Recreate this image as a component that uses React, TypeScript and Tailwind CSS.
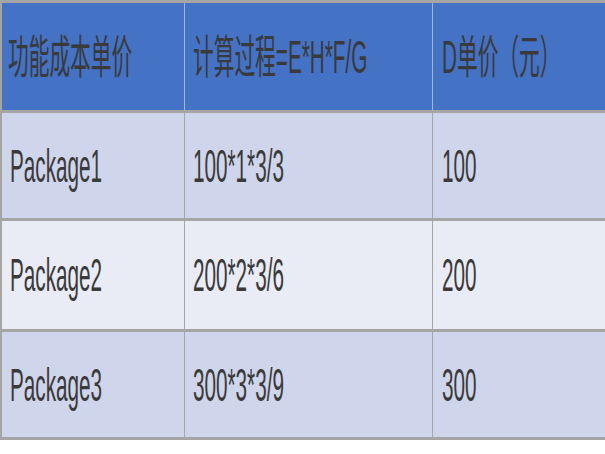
const rows = [
  { name: "Package1", calc: "100*1*3/3", price: "100", bg: "bg-[#CFD5EA]", h: "h-[108px]" },
  { name: "Package2", calc: "200*2*3/6", price: "200", bg: "bg-[#E9EBF5]", h: "h-[111px]" },
  { name: "Package3", calc: "300*3*3/9", price: "300", bg: "bg-[#CFD5EA]", h: "h-[108px]" },
];

const Txt = ({ children }: { children: React.ReactNode }) => (
  <span className="inline-block origin-left scale-x-[0.45] whitespace-nowrap text-[46px] leading-none text-[#3a3a3a]">
    {children}
  </span>
);

export default function App() {
  return (
    <div
      className="w-full overflow-hidden bg-white"
      style={{ fontFamily: '"Liberation Sans", "Noto Sans CJK SC", sans-serif' }}
    >
      <div className="border-t-[3px] border-l-2 border-[#A5A5A5]">
        <div className="flex h-[110px] border-b-[3px] border-[#A5A5A5] bg-[#4472C4]">
          <div className="flex w-[183px] shrink-0 items-center overflow-hidden border-r border-[#A9B4CF] pl-[6px]">
            <Txt>功能成本单价</Txt>
          </div>
          <div className="flex w-[248px] shrink-0 items-center overflow-hidden border-r border-[#A9B4CF] pl-[8px]">
            <Txt>计算过程=E*H*F/G</Txt>
          </div>
          <div className="flex min-w-0 flex-1 items-center overflow-hidden pl-[9px]">
            <Txt>D单价（元）</Txt>
          </div>
        </div>
        {rows.map((r) => (
          <div key={r.name} className={`flex ${r.h} border-b-[3px] border-[#A5A5A5] ${r.bg}`}>
            <div className="flex w-[183px] shrink-0 items-center overflow-hidden border-r border-[#A5A5A5] pl-[8px]">
              <Txt>{r.name}</Txt>
            </div>
            <div className="flex w-[248px] shrink-0 items-center overflow-hidden border-r border-[#A5A5A5] pl-[8px]">
              <Txt>{r.calc}</Txt>
            </div>
            <div className="flex min-w-0 flex-1 items-center overflow-hidden pl-[9px]">
              <Txt>{r.price}</Txt>
            </div>
          </div>
        ))}
      </div>
    </div>
  );
}
